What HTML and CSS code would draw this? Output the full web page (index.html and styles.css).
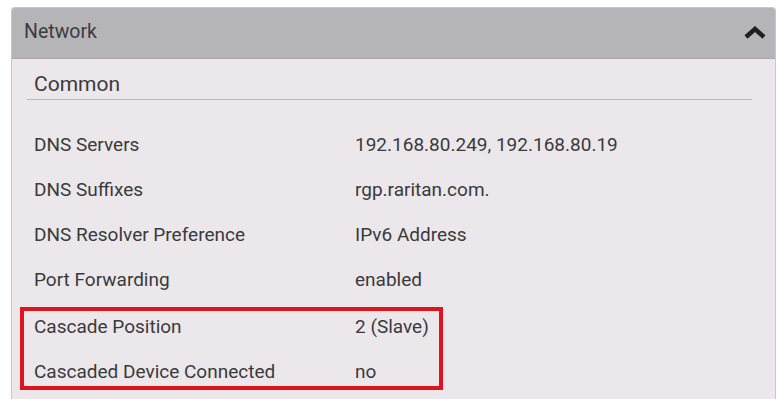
FILE: index.html
```html
<!DOCTYPE html>
<html lang="en">
<head>
    <meta charset="UTF-8">
    <meta name="viewport" content="width=device-width, initial-scale=1.0">
    <title>Network</title>
    <link rel="stylesheet" href="styles.css">
</head>
<body>

<!-- Painel de rede -->
<div class="panel">
    <div class="panel-header">
        <span>Network</span>
        <svg class="chevron" width="24" height="16" viewBox="0 0 24 16">
            <polyline points="3,13 12,5 21,13" fill="none" stroke="#1f1f22" stroke-width="4.5" stroke-linejoin="miter"/>
        </svg>
    </div>

    <div class="panel-body">
        <div class="section-title">Common</div>

        <div class="rows">
            <div class="row">
                <div class="label">DNS Servers</div>
                <div class="value">192.168.80.249, 192.168.80.19</div>
            </div>
            <div class="row">
                <div class="label">DNS Suffixes</div>
                <div class="value">rgp.raritan.com.</div>
            </div>
            <div class="row">
                <div class="label">DNS Resolver Preference</div>
                <div class="value">IPv6 Address</div>
            </div>
            <div class="row">
                <div class="label">Port Forwarding</div>
                <div class="value">enabled</div>
            </div>

            <!-- Linhas destacadas -->
            <div class="highlight">
                <div class="row">
                    <div class="label">Cascade Position</div>
                    <div class="value">2 (Slave)</div>
                </div>
                <div class="row">
                    <div class="label">Cascaded Device Connected</div>
                    <div class="value">no</div>
                </div>
            </div>
        </div>
    </div>
</div>

</body>
</html>
```

FILE: styles.css
```css
body {
    font-family: Roboto, "Liberation Sans", sans-serif;
    background-color: #ffffff;
    margin: 0;
    padding: 7px 8px 0 11px;
    color: #3a3a3c;
}

.panel {
    width: 763px;
    height: 391px;
    border: 1px solid #c9c7ca;
    border-bottom: none;
    border-radius: 4px 4px 0 0;
    background-color: #ebe7ea;
    overflow: hidden;
}

.panel-header {
    height: 50px;
    background-color: #b5b5b8;
    border-bottom: 1px solid #a9a9ac;
    display: flex;
    align-items: center;
    justify-content: space-between;
    padding: 0 8px 0 12px;
    font-size: 19.5px;
    color: #3b3b3e;
}

.panel-header span {
    margin-top: -4px;
}

.chevron {
    margin-top: -2px;
}

.section-title {
    margin: 0 23px 0 15px;
    padding: 13px 7px 3px;
    font-size: 21px;
    line-height: 24px;
    border-bottom: 1px solid #b9b7ba;
}

.rows {
    padding-top: 22px;
}

.row {
    display: grid;
    grid-template-columns: 321px 1fr;
    height: 45px;
    align-items: center;
    padding-left: 22px;
    font-size: 19px;
}

.highlight {
    width: 415px;
    margin: 5px 0 0 8px;
    border: 4px solid #e0141d;
    display: flex;
    flex-direction: column;
    gap: 15px;
}

.highlight .row {
    height: 30px;
    padding-left: 10px;
}
```
